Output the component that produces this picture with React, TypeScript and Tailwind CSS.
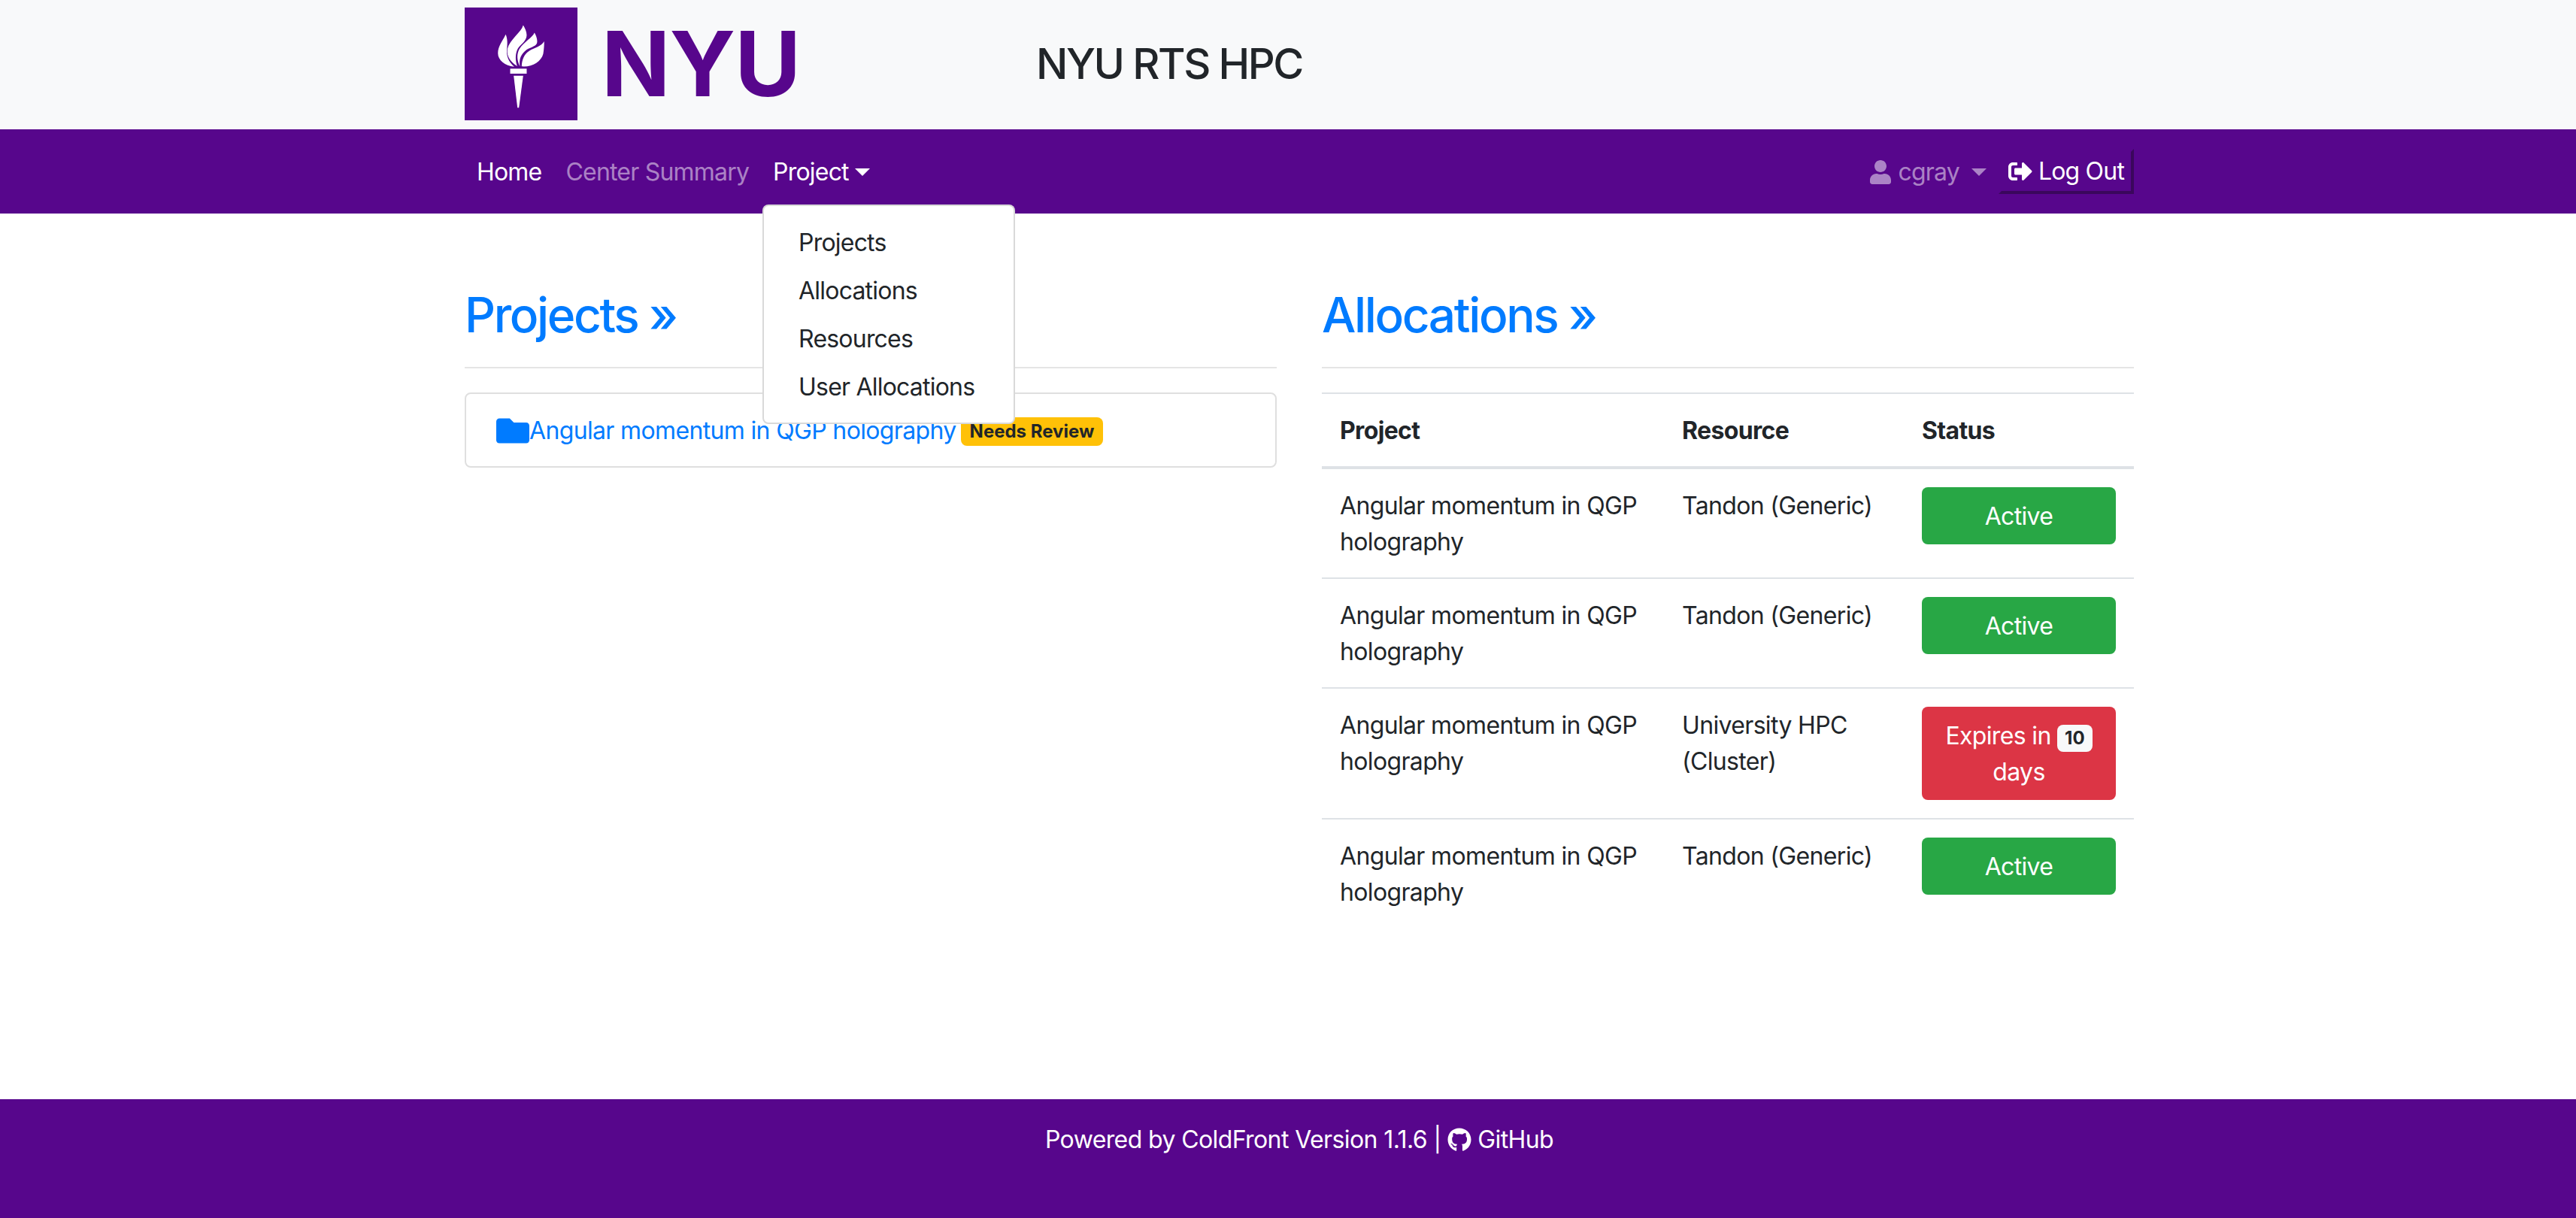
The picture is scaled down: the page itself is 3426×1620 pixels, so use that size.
import { FaFolder, FaGithub, FaSignOutAlt, FaUser } from 'react-icons/fa';

const TorchLogo = () => (
  <svg viewBox="24 30 451 450" className="h-[150px] w-[150px] shrink-0 bg-[#57068c]">
    <g fill="#fff">
      <path d="M188 137C175 165 157 185 157 212C157 240 185 262 222 266C198 245 190 222 193 195C195 175 196 155 188 137Z" />
      <path d="M258 100C250 130 205 155 195 195C190 225 210 250 234 264C226 240 226 215 236 195C245 178 272 165 272 140C272 125 265 112 258 100Z" />
      <path d="M303 130C295 150 262 165 243 195C232 215 232 240 245 265C240 235 250 215 272 198C290 187 315 185 314 165C314 152 309 140 303 130Z" />
      <path d="M342 165C330 185 305 190 282 203C262 215 252 240 252 265C295 268 330 245 338 215C341 198 342 182 342 165Z" />
      <rect x="206" y="274" width="66" height="20" />
      <polygon points="220,302 258,302 241,430 235,430" />
    </g>
  </svg>
);

const rows = [
  { resource: 'Tandon (Generic)', expires: false },
  { resource: 'Tandon (Generic)', expires: false },
  { resource: 'University HPC (Cluster)', expires: true },
  { resource: 'Tandon (Generic)', expires: false },
];

export default function App() {
  return (
    <div className="flex min-h-screen flex-col overflow-hidden bg-white font-[Inter,sans-serif] text-[32px] leading-[48px] tracking-[-0.65px] text-[#212529]">
      <header className="h-[172px] bg-[#f8f9fa] pl-[30px]">
        <div className="mx-auto flex w-[2220px] items-start pt-[10px]">
          <TorchLogo />
          <span className="ml-[32px] w-[578px] text-[120px] leading-[150px] font-bold tracking-[-1px] text-[#57068c]">NYU</span>
          <h1 className="h-[150px] text-[56px] leading-[150px] font-medium tracking-[-2.4px]">NYU RTS HPC</h1>
        </div>
      </header>

      <nav className="h-[112px] bg-[#57068c] py-4 pl-[30px] tracking-[-0.8px] text-white">
        <div className="mx-auto flex w-[2220px] items-center">
          <a className="px-4 pt-[17px] pb-[15px]">Home</a>
          <a className="px-4 pt-[17px] pb-[15px] text-white/50">Center Summary</a>
          <div className="relative">
            <a className="flex items-center px-4 pt-[17px] pb-[15px]">
              Project
              <span className="ml-2 h-0 w-0 border-x-[10px] border-t-[10px] border-x-transparent border-t-white" />
            </a>
            <div className="absolute top-[84px] left-[2px] z-10 w-[336px] rounded-lg border-2 border-black/15 bg-white py-4 text-[#212529]">
              {['Projects', 'Allocations', 'Resources', 'User Allocations'].map((item) => (
                <a key={item} className="block px-[46px] pt-[9px] pb-[7px] whitespace-nowrap">{item}</a>
              ))}
            </div>
          </div>
          <div className="ml-auto flex items-center">
            <a className="flex items-center px-4 pt-[17px] pb-[15px] text-white/50">
              <FaUser className="mr-2 text-[32px]" />
              cgray
              <span className="ml-4 h-0 w-0 border-x-[10px] border-t-[10px] border-x-transparent border-t-white/50" />
            </a>
            <button className="flex h-[60px] w-[180px] items-center justify-center border-4 border-t-transparent border-r-[#3a075c] border-b-[#3a075c] border-l-transparent">
              <FaSignOutAlt className="mr-2 text-[32px]" />
              Log Out
            </button>
          </div>
        </div>
      </nav>

      <main className="flex-1 pl-[30px]">
        <div className="mx-auto grid w-[2220px] grid-cols-2 gap-x-[60px] pt-[96px]">
          <section>
            <h2 className="text-[64px] leading-[77px] font-medium tracking-[-2.4px] text-[#007bff]">Projects »</h2>
            <hr className="mt-[31px] mb-8 border-t-2 border-[#e5e5e5]" />
            <div className="flex h-[100px] items-center rounded-lg border-2 border-[#dfdfdf] px-10 pt-[2px]">
              <FaFolder className="text-[44px] text-[#007bff]" />
              <a className="text-[#007bff]">Angular momentum in QGP holography</a>
              <span className="mt-[2px] ml-[6px] rounded-lg bg-[#ffc107] px-[12px] text-[24px] leading-[38px] font-bold tracking-normal">Needs Review</span>
            </div>
          </section>

          <section>
            <h2 className="text-[64px] leading-[77px] font-medium tracking-[-2.4px] text-[#007bff]">Allocations »</h2>
            <hr className="mt-[31px] mb-8 border-t-2 border-[#e5e5e5]" />
            <table className="w-full table-fixed border-t-2 border-[#dee2e6] text-left">
              <thead>
                <tr className="border-b-4 border-[#dee2e6]">
                  <th className="w-[455px] px-6 pt-[25px] pb-[23px] font-bold">Project</th>
                  <th className="w-[319px] px-6 pt-[25px] pb-[23px] font-bold">Resource</th>
                  <th className="px-6 pt-[25px] pb-[23px] font-bold">Status</th>
                </tr>
              </thead>
              <tbody>
                {rows.map((row, index) => (
                  <tr key={index} className={index < rows.length - 1 ? 'border-b-2 border-[#dee2e6]' : ''}>
                    <td className="px-6 pt-[25px] pb-[23px] align-top">Angular momentum in QGP holography</td>
                    <td className="px-6 pt-[25px] pb-[23px] align-top">{row.resource}</td>
                    <td className="p-6 align-top">
                      {row.expires ? (
                        <div className="rounded-lg bg-[#dc3545] px-6 pt-[15px] pb-[13px] text-center text-white">
                          Expires in{' '}
                          <span className="inline-block rounded-lg bg-[#f8f9fa] px-[10px] py-[6px] text-[24px] leading-none font-bold tracking-normal text-[#212529]">10</span>{' '}
                          days
                        </div>
                      ) : (
                        <div className="rounded-lg bg-[#28a745] px-6 pt-[15px] pb-[13px] text-center text-white">Active</div>
                      )}
                    </td>
                  </tr>
                ))}
              </tbody>
            </table>
          </section>
        </div>
      </main>

      <footer className="flex h-[158px] items-start justify-center bg-[#57068c] pt-[30px] pl-[30px] tracking-[-0.6px] text-white">
        <span className="flex items-center whitespace-pre">
          Powered by ColdFront Version 1.1.6 | <FaGithub className="text-[32px]" /> GitHub
        </span>
      </footer>
    </div>
  );
}
